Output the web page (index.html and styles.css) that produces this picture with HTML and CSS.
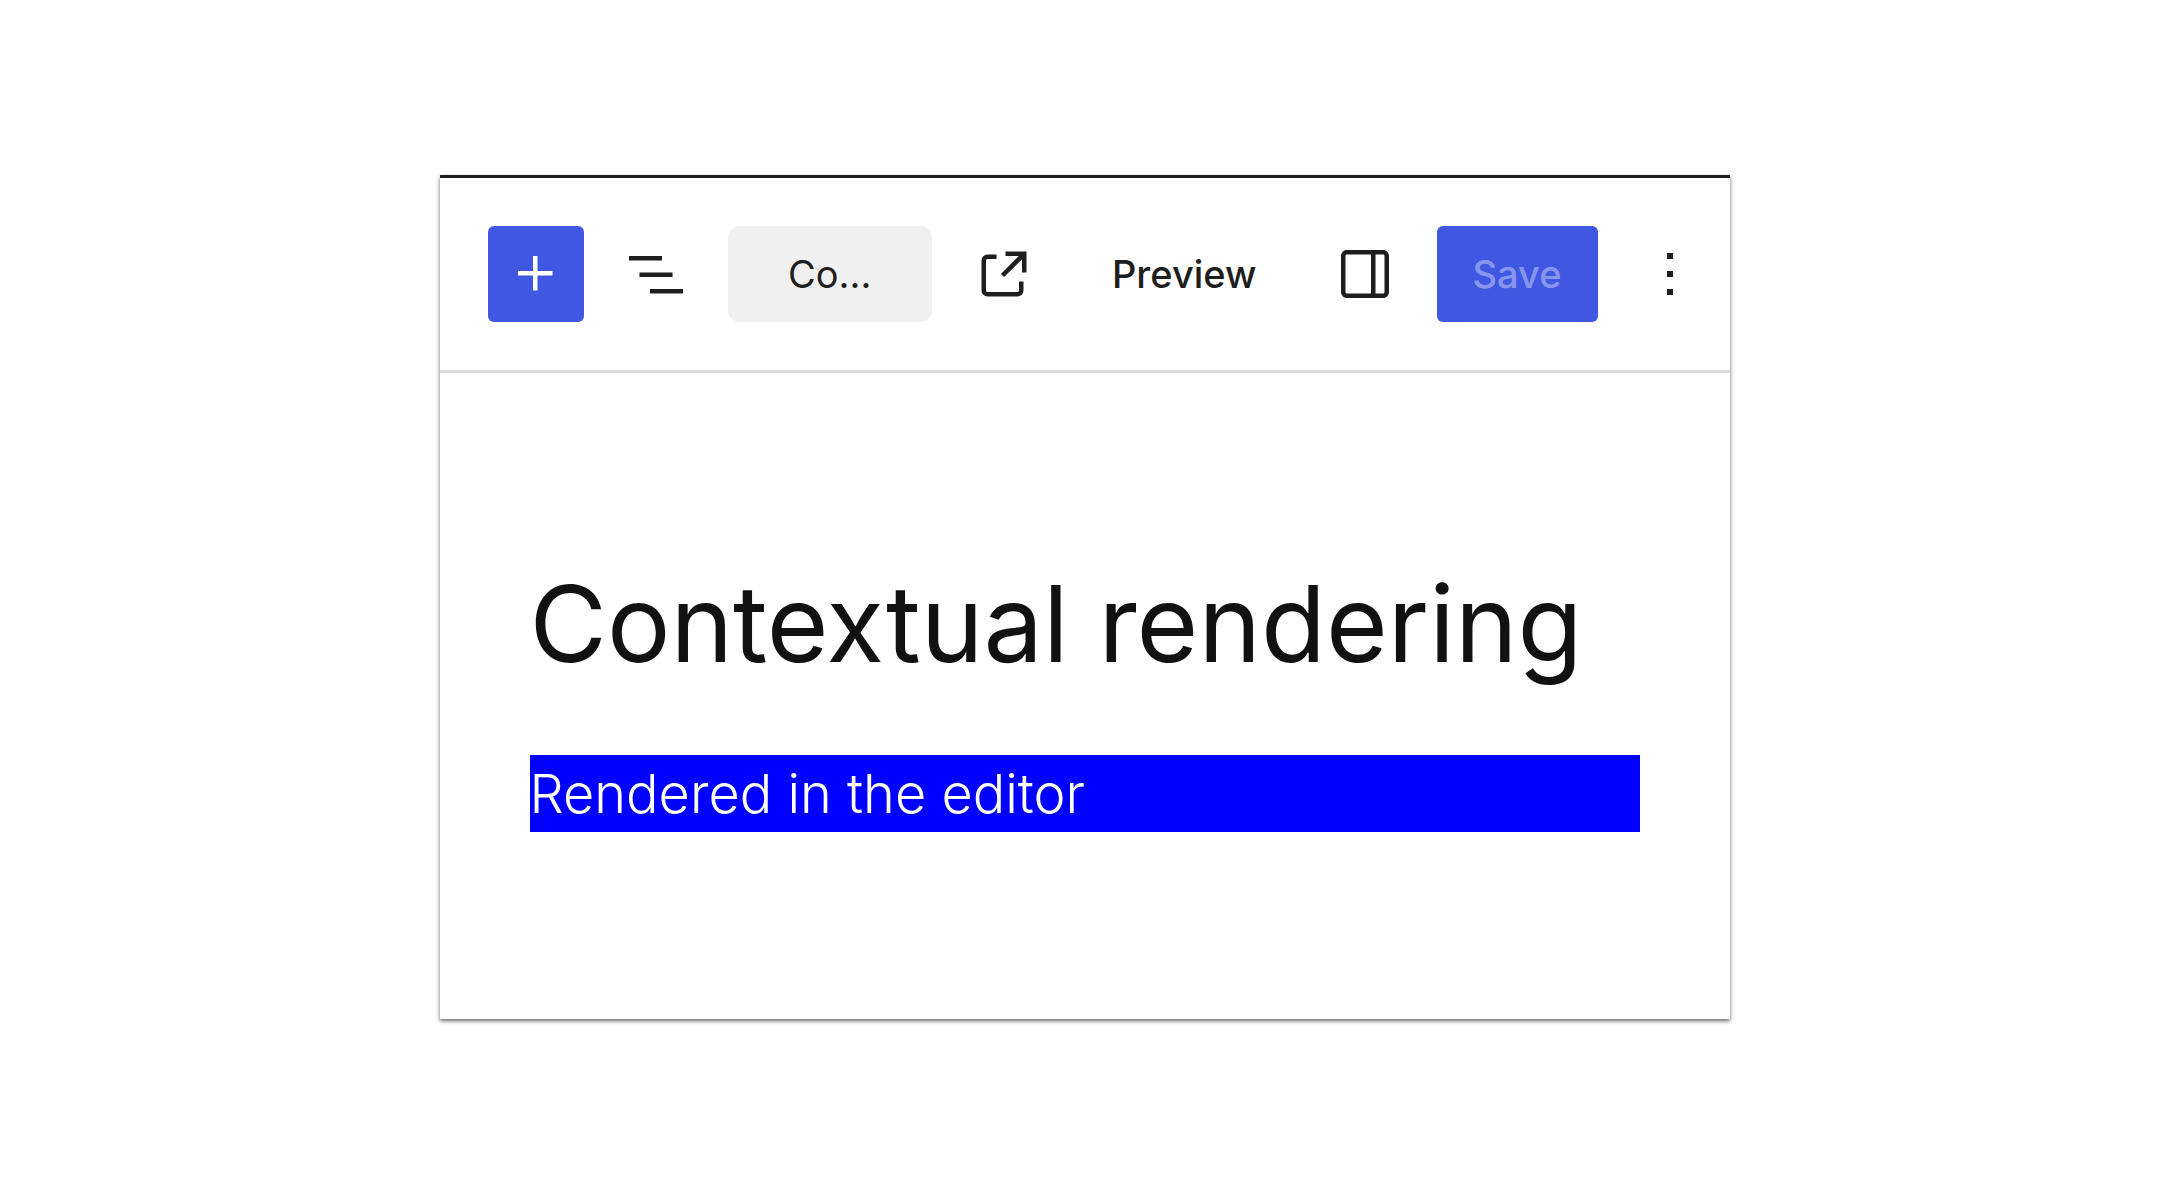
FILE: index.html
```html
<!DOCTYPE html>
<html lang="en">
<head>
    <meta charset="UTF-8">
    <meta name="viewport" content="width=device-width, initial-scale=1.0">
    <title>Contextual rendering</title>
    <link rel="stylesheet" href="styles.css">
</head>
<body>
    <div class="editor">
        <header class="editor-header">
            <div class="toolbar">
                <button class="btn icon-btn primary" aria-label="Toggle block inserter">
                    <svg class="icon" viewBox="0 0 24 24"><path d="M11 12.5V17.5H12.5V12.5H17.5V11H12.5V6H11V11H6V12.5H11Z"/></svg>
                </button>
                <button class="btn icon-btn" aria-label="Document overview">
                    <svg class="icon" viewBox="0 0 24 24"><path d="M3 6h11v1.5H3V6Zm3.5 5.5h11V13h-11v-1.5ZM21 17H10v1.5h11V17Z"/></svg>
                </button>
            </div>
            <button class="btn document-bar"><span class="document-title">Co...</span></button>
            <div class="settings">
                <a class="btn icon-btn" href="#" aria-label="View post">
                    <svg class="icon" viewBox="0 0 24 24"><path d="M19.5 4.5h-7V6h4.44l-5.97 5.97 1.06 1.06L18 7.06v4.44h1.5v-7Zm-13 1a2 2 0 0 0-2 2v10a2 2 0 0 0 2 2h10a2 2 0 0 0 2-2v-3H17v3a.5.5 0 0 1-.5.5h-10a.5.5 0 0 1-.5-.5v-10a.5.5 0 0 1 .5-.5h3V5.5h-3Z"/></svg>
                </a>
                <button class="btn preview-btn">Preview</button>
                <button class="btn icon-btn" aria-label="Settings">
                    <svg class="icon" viewBox="0 0 24 24"><path fill-rule="evenodd" d="M18 4H6c-1.1 0-2 .9-2 2v12c0 1.1.9 2 2 2h12c1.1 0 2-.9 2-2V6c0-1.1-.9-2-2-2zm-4 14.5H6c-.3 0-.5-.2-.5-.5V6c0-.3.2-.5.5-.5h8v13zm4.5-.5c0 .3-.2.5-.5.5h-2.5v-13H18c.3 0 .5.2.5.5v12z"/></svg>
                </button>
                <button class="btn primary save-btn" disabled>Save</button>
                <button class="btn icon-btn" aria-label="Options">
                    <svg class="icon" viewBox="0 0 24 24"><path d="M13 19h-2v-2h2v2zm0-6h-2v-2h2v2zm0-6h-2V5h2v2z"/></svg>
                </button>
            </div>
        </header>
        <main class="editor-content">
            <h1 class="post-title">Contextual rendering</h1>
            <p class="block">Rendered in the editor</p>
        </main>
    </div>
</body>
</html>
```
FILE: styles.css
```css
* {
    box-sizing: border-box;
}
body {
    display: flex;
    align-items: flex-start;
    justify-content: center;
    margin: 0;
    padding: 175px 24px 24px;
    background: #fff;
    font-family: Inter, "Liberation Sans", sans-serif;
}
.editor {
    width: 100%;
    max-width: 1290px;
    border-top: 3px solid #1e1e1e;
    background: #fff;
    box-shadow: 0 2px 4px rgba(0, 0, 0, 0.6);
}

/* Header */
.editor-header {
    display: flex;
    align-items: center;
    gap: 24px;
    padding: 48px 12px 48px 48px;
    border-bottom: 3px solid #ddd;
}
.toolbar, .settings {
    display: flex;
    align-items: center;
    gap: 24px;
}
.btn {
    display: flex;
    align-items: center;
    justify-content: center;
    height: 96px;
    padding: 0 36px;
    border: 0;
    border-radius: 6px;
    background: none;
    color: #1e1e1e;
    font: 500 38px Inter, "Liberation Sans", sans-serif;
    cursor: pointer;
}
.icon-btn {
    width: 96px;
    padding: 0;
}
.icon {
    width: 72px;
    height: 72px;
    fill: currentColor;
}
.primary {
    background: #3f57e1;
    color: #fff;
}
.save-btn:disabled {
    color: rgba(255, 255, 255, 0.4);
    cursor: default;
}
.document-bar {
    flex: 1;
    min-width: 0;
    border-radius: 12px;
    background: #f0f0f0;
    font-weight: 400;
}

/* Content */
.editor-content {
    padding: 188px 90px 187px;
}
.post-title {
    margin: 0 0 68px;
    color: #111;
    font-size: 106px;
    font-weight: 400;
    line-height: 126px;
}
.block {
    margin: 0;
    background: #00f;
    color: #fff;
    font-size: 54px;
    font-weight: 300;
    line-height: 77px;
}
```
